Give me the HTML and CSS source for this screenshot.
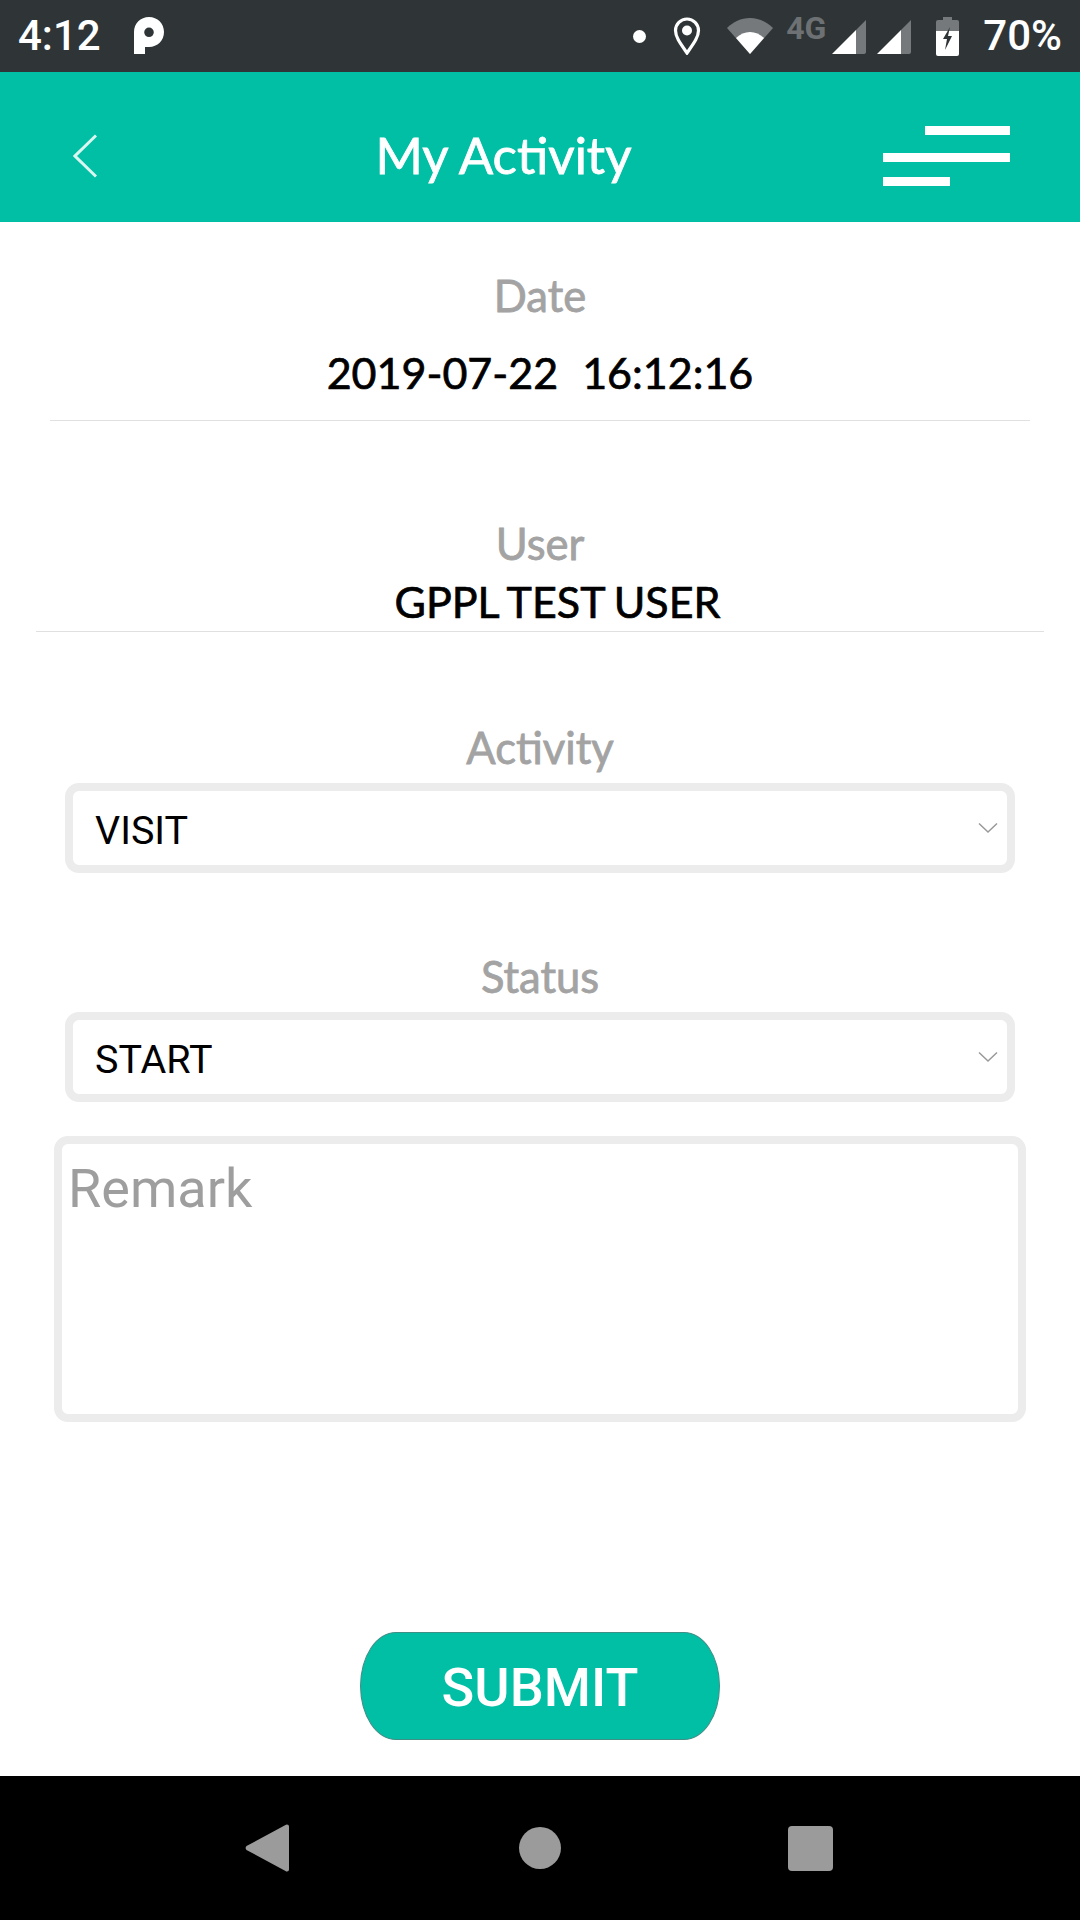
FILE: index.html
```html
<!DOCTYPE html>
<html lang="en">
<head>
<meta charset="utf-8">
<title>My Activity</title>
<link rel="stylesheet" href="styles.css">
</head>
<body>
<div class="app">
  <div class="statusbar">
    <div class="status-left">
      <span class="clock">4:12</span>
      <svg class="ico-p" width="30" height="38" viewBox="0 0 30 38"><path d="M0 37V15C0 6.500 6.500 0 15 0s15 6.500 15 15-6.500 15-15 15h-4v7zM15 10.500a4.800 4.800 0 1 0 0 9.600 4.800 4.800 0 0 0 0-9.600z" fill="#fff" fill-rule="evenodd"/></svg>
    </div>
    <div class="status-right">
      <span class="dot"></span>
      <svg class="ico-pin" width="28" height="38" viewBox="0 0 28 38"><path d="M14 36C7 26 2.500 20 2.500 13.500a11.500 11.500 0 0 1 23 0C25.500 20 21 26 14 36z" fill="none" stroke="#fff" stroke-width="3.200"/><circle cx="14" cy="13.500" r="5" fill="#fff"/></svg>
      <svg class="ico-wifi" width="46" height="36" viewBox="0 0 46 36"><path d="M0 10C6 4 14 0 23 0s17 4 23 10L23 36z" fill="#75797b"/><path d="M9 20C13 16 18 14 23 14s10 2 14 6L23 36z" fill="#fff"/></svg>
      <span class="net">4G</span>
      <svg class="ico-sig" width="34" height="34" viewBox="0 0 34 34"><path d="M0 34L24 10V34z" fill="#fff"/><path d="M24 10L34 0V32a2 2 0 0 1-2 2H24z" fill="#75797b"/></svg>
      <svg class="ico-sig sig-second" width="34" height="34" viewBox="0 0 34 34"><path d="M0 34L24 10V34z" fill="#fff"/><path d="M24 10L34 0V32a2 2 0 0 1-2 2H24z" fill="#75797b"/></svg>
      <svg class="ico-bat" width="23" height="39" viewBox="0 0 23 39"><path d="M7 0h9v3h5a2 2 0 0 1 2 2v9H0V5a2 2 0 0 1 2-2h5z" fill="#75797b"/><path d="M0 14h23v23a2 2 0 0 1-2 2H2a2 2 0 0 1-2-2z" fill="#fff"/><path d="M14 10L7 22h4l-2 11 7-14h-4l2-9z" fill="#2f3537"/></svg>
      <span class="battery">70%</span>
    </div>
  </div>

  <header class="topbar">
    <svg class="ico-back" width="24" height="44" viewBox="0 0 24 44"><path d="M23 1.500L2 22l21 20.500" fill="none" stroke="#d9f6f0" stroke-width="3"/></svg>
    <h1 class="title">My Activity</h1>
    <div class="menu">
      <span class="bar bar-a"></span>
      <span class="bar bar-b"></span>
      <span class="bar bar-c"></span>
    </div>
  </header>

  <main class="content">
    <section class="info info-date">
      <div class="label">Date</div>
      <div class="value value-date">2019-07-22&nbsp;&nbsp;&nbsp;16:12:16</div>
    </section>
    <section class="info info-user">
      <div class="label">User</div>
      <div class="value value-user">GPPL TEST USER</div>
    </section>

    <div class="label label-activity">Activity</div>
    <div class="select">
      <span>VISIT</span>
      <svg class="chev" width="20" height="12" viewBox="0 0 20 12"><path d="M1 1.500l9 8.500 9-8.500" fill="none" stroke="#999" stroke-width="1.500"/></svg>
    </div>

    <div class="label label-status">Status</div>
    <div class="select">
      <span>START</span>
      <svg class="chev" width="20" height="12" viewBox="0 0 20 12"><path d="M1 1.500l9 8.500 9-8.500" fill="none" stroke="#999" stroke-width="1.500"/></svg>
    </div>

    <div class="remark">Remark</div>

    <button class="submit" type="button">SUBMIT</button>
  </main>

  <nav class="navbar">
    <svg width="44" height="48" viewBox="0 0 44 48"><path d="M42 0.500a2 2 0 0 1 2 2v43a2 2 0 0 1-2 2 2 2 0 0 1-1.500-.5L1.500 26a3 3 0 0 1 0-4L40.500 1a2 2 0 0 1 1.500-.5z" fill="#9b9b9b"/></svg>
    <span class="nav-circle"></span>
    <span class="nav-square"></span>
  </nav>
</div>
</body>
</html>
```

FILE: styles.css
```css
* { box-sizing: border-box; }
html, body { margin: 0; padding: 0; }
body { width: 1080px; height: 1920px; background: #fff; overflow: hidden; }
.app { display: flex; flex-direction: column; width: 1080px; height: 1920px; }

.statusbar {
  height: 72px;
  flex: none;
  background: #2f3537;
  color: #fff;
  display: flex;
  justify-content: space-between;
  align-items: center;
  padding: 0 18px 0 18px;
  font-family: Roboto, sans-serif;
}
.status-left, .status-right { display: flex; align-items: center; }
.clock { font-size: 42px; line-height: 72px; font-weight: 500; }
.ico-p { margin-left: 33px; }
.dot { width: 13px; height: 13px; border-radius: 50%; background: #fff; }
.ico-pin { margin-left: 27px; }
.ico-wifi { margin-left: 26px; }
.net { margin-left: 13px; font-size: 32px; font-weight: 700; color: #6d7173; line-height: 32px; align-self: flex-start; margin-top: 12px; }
.ico-sig { margin-left: 6px; align-self: flex-start; margin-top: 20px; }
.sig-second { margin-left: 11px; }
.ico-bat { margin-left: 25px; }
.battery { margin-left: 24px; font-size: 42px; line-height: 72px; font-weight: 500; }

.topbar {
  height: 150px;
  flex: none;
  background: #00bfa5;
  display: flex;
  align-items: center;
  justify-content: space-between;
  padding: 18px 70px 0 73px;
}
.title {
  margin: 0;
  font-family: Lato, sans-serif;
  font-size: 51px;
  font-weight: 400;
  -webkit-text-stroke: 0.8px #fff;
  color: #fff;
  line-height: 60px;
  flex: 1;
  text-align: center;
  padding: 0 0 2px 27px;
}
.menu { display: flex; flex-direction: column; align-items: flex-end; gap: 18px; width: 127px; }
.bar { display: block; height: 9px; background: #fff; }
.bar-a { width: 85px; }
.bar-b { width: 127px; }
.bar-c { width: 67px; align-self: flex-start; margin-top: -3px; }

.content { flex: 1; display: flex; flex-direction: column; align-items: center; padding-bottom: 36px; }
.label {
  font-family: Lato, sans-serif;
  font-size: 43.500px;
  font-weight: 400;
  -webkit-text-stroke: 0.8px #a3a3a3;
  color: #a3a3a3;
  line-height: 50px;
  text-align: center;
}
.value {
  font-family: Lato, sans-serif;
  font-size: 43px;
  font-weight: 400;
  -webkit-text-stroke: 0.7px #000;
  color: #000;
  line-height: 50px;
  text-align: center;
}
.info { border-bottom: 1px solid #e0e0e0; }
.info-date { width: 980px; margin-top: 48px; height: 151px; }
.value-date { margin-top: 28px; word-spacing: -3px; }
.info-user { width: 1008px; margin-top: 97px; height: 114px; }
.value-user { padding-left: 35px; margin-top: 9px; word-spacing: -1.500px; }

.label-activity { margin-top: 90px; }
.label-status { margin-top: 78px; }
.select {
  width: 950px;
  height: 90px;
  margin-top: 11px;
  border: 8px solid #ececec;
  border-radius: 14px;
  background: #fff;
  display: flex;
  align-items: center;
  justify-content: space-between;
  padding: 4px 0 0 22px;
  font-family: Roboto, sans-serif;
  font-size: 39.500px;
  color: #000;
}
.chev { margin-right: 9px; margin-top: -4px; }
.remark {
  width: 972px;
  height: 286px;
  margin-top: 34px;
  border: 8px solid #ececec;
  border-radius: 14px;
  padding: 13px 0 0 6px;
  font-family: Roboto, sans-serif;
  font-size: 54px;
  line-height: 64px;
  color: #9e9e9e;
}
.submit {
  margin-top: auto;
  width: 360px;
  height: 108px;
  border: 1px solid #3f8f86;
  border-radius: 36px / 54px;
  background: #00bfa5;
  color: #fff;
  font-family: Roboto, sans-serif;
  font-size: 54px;
  font-weight: 500;
  padding: 2px 0 0;
}

.navbar {
  height: 144px;
  flex: none;
  background: #000;
  display: flex;
  align-items: center;
  padding-left: 245px;
}
.nav-circle { width: 42px; height: 42px; border-radius: 50%; background: #9b9b9b; margin-left: 230px; }
.nav-square { width: 45px; height: 45px; border-radius: 4px; background: #9b9b9b; margin-left: 227px; }
```
